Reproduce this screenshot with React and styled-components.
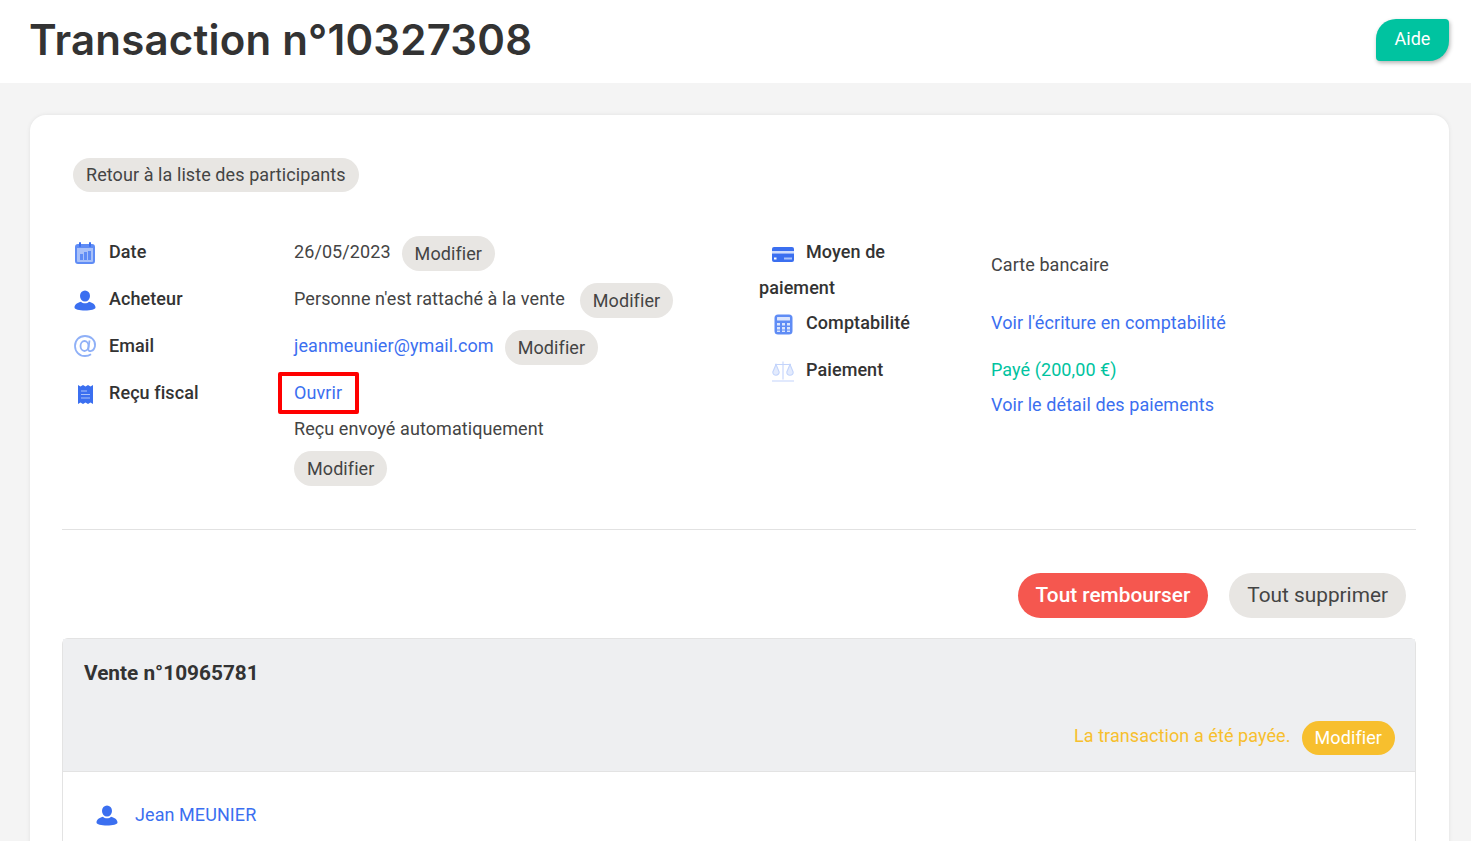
import React from "react";
import styled, { createGlobalStyle } from "styled-components";

const GlobalStyle = createGlobalStyle`
  html, body {
    margin: 0;
    padding: 0;
    height: 100%;
    overflow: hidden;
    background: #f4f4f4;
    font-family: "Roboto", "Liberation Sans", sans-serif;
    font-size: 18px;
    letter-spacing: 0.08px;
    color: #444;
  }
  * { box-sizing: border-box; }
`;

const BLUE = "#3b6ff0";
const MID = "#5f8cf5";
const LIGHT = "#a9c1f9";

const Page = styled.div`
  height: 100vh;
  overflow: hidden;
`;

const Header = styled.header`
  height: 83px;
  background: #fff;
  padding: 0 22px 0 29px;
  display: flex;
  justify-content: space-between;
  align-items: center;
`;

const Title = styled.h1`
  margin: -4px 0 0;
  font-family: "Inter", "Open Sans", sans-serif;
  font-size: 42px;
  font-weight: 600;
  letter-spacing: 0.2px;
  color: #333;
`;

const HelpButton = styled.button`
  width: 73px;
  height: 42px;
  margin-top: -4px;
  padding: 0 0 2px;
  border: 0;
  border-radius: 20px 4px 20px 4px;
  background: #00c3a0;
  color: #fff;
  font: 400 18px "Roboto", sans-serif;
  box-shadow: 1px 2px 4px rgba(0, 0, 0, 0.3);
`;

const Main = styled.main`
  padding: 32px 22px 0 30px;
`;

const Card = styled.section`
  background: #fff;
  border-radius: 16px;
  padding: 43px 33px 40px 32px;
  box-shadow: 0 0 4px rgba(0, 0, 0, 0.08);
`;

const Pill = styled.button`
  display: ${(p) => (p.$block ? "block" : "inline-block")};
  height: ${(p) => p.$height || 35}px;
  padding: 0 13px 1px;
  border: 0;
  border-radius: 18px;
  background: ${(p) => p.$bg || "#e8e6e3"};
  color: ${(p) => p.$color || "#444"};
  font: 400 18px "Roboto", sans-serif;
  letter-spacing: 0.08px;
  white-space: nowrap;
`;

const BackRow = styled.div`
  padding-left: 11px;
  height: 34px;
`;

const Details = styled.div`
  display: grid;
  grid-template-columns: 697px 1fr;
  padding: 44px 0 43px;
  border-bottom: 1px solid #e2e2e2;
`;

const LeftColumn = styled.div`
  padding-left: 11px;
`;

const InfoRow = styled.div`
  display: grid;
  grid-template-columns: ${(p) => p.$labelWidth}px 1fr;
  min-height: ${(p) => p.$minHeight || 47}px;
`;

const Label = styled.div`
  margin-top: -2px;
  font-weight: 500;
  color: #333;
  line-height: 36px;
`;

const IconSlot = styled.span`
  display: inline-flex;
  justify-content: center;
  align-items: center;
  width: 24px;
  height: 24px;
  margin: 0 ${(p) => (p.$indent ? 11 : 12)}px 0 ${(p) => p.$indent || 0}px;
  vertical-align: ${(p) => p.$drop || -6}px;
`;

const Value = styled.div`
  display: flex;
  flex-wrap: wrap;
  align-items: flex-start;
  align-content: flex-start;
  column-gap: ${(p) => p.$gap || 11}px;
  padding-top: ${(p) => p.$top || 0}px;
  line-height: 32px;
  color: #444;
`;

const TextLine = styled.div`
  line-height: ${(p) => p.$line || 32}px;
  margin-bottom: ${(p) => p.$after || 0}px;
`;

const BlueLink = styled.a`
  color: ${BLUE};
  text-decoration: none;
`;

const GreenText = styled(TextLine)`
  color: #00c3a0;
`;

const Highlighted = styled.span`
  position: relative;
  display: inline-block;
  &::after {
    content: "";
    position: absolute;
    left: -16px;
    right: -17px;
    top: -5px;
    bottom: -5px;
    border: 4px solid #ff0000;
    border-radius: 2px;
  }
`;

const Actions = styled.div`
  display: flex;
  justify-content: flex-end;
  gap: 21px;
  padding: 43px 10px 20px 0;
`;

const BigPill = styled.button`
  height: 45px;
  padding: 0 18px 1px;
  border: 0;
  border-radius: 23px;
  background: ${(p) => p.$bg};
  color: ${(p) => p.$color};
  font: ${(p) => p.$weight} 20.8px "Roboto", sans-serif;
`;

const SaleBox = styled.div`
  border: 1px solid #e3e3e3;
  border-radius: 6px 6px 0 0;
  height: 300px;
`;

const SaleHeader = styled.div`
  height: 133px;
  background: #eeeff1;
  border-bottom: 1px solid #e3e3e3;
  padding: 19px 20px 16px 21px;
  display: flex;
  flex-direction: column;
  justify-content: space-between;
`;

const SaleTitle = styled.div`
  font-size: 20.8px;
  font-weight: 700;
  color: #333;
  line-height: 30px;
  letter-spacing: 0;
`;

const SaleStatus = styled.div`
  display: flex;
  justify-content: flex-end;
  align-items: flex-start;
  gap: 11px;
  line-height: 30px;
  color: #f7bf2e;
`;

const Participant = styled.div`
  display: flex;
  align-items: center;
  gap: 17px;
  padding: 31px 0 0 33px;
  line-height: 24px;
`;

const CalendarIcon = () => (
  <svg width="20" height="22" viewBox="0 0 20 22">
    <rect x="1" y="3" width="18" height="18" rx="2" fill={LIGHT} stroke={MID} strokeWidth="2" />
    <rect x="1" y="3" width="18" height="3" fill={MID} />
    <rect x="4" y="0" width="2" height="5" rx="1" fill={BLUE} />
    <rect x="14" y="0" width="2" height="5" rx="1" fill={BLUE} />
    <path d="M5 12h3v6H5zM9 10h3v8H9zM13 9h3v9h-3z" fill={MID} />
  </svg>
);

const PersonIcon = () => (
  <svg width="22" height="21" viewBox="0 0 22 21">
    <ellipse cx="11" cy="6" rx="5" ry="5.500" fill={BLUE} />
    <path d="M0.500 17.500c0-3.200 4-5.200 6.500-5.700 1 1 2.500 1.500 4 1.500s3-.5 4-1.500c2.500.5 6.500 2.500 6.500 5.700 0 2-4.700 3-10.500 3s-10.500-1-10.500-3z" fill={BLUE} />
  </svg>
);

const AtIcon = () => (
  <svg width="24" height="24" viewBox="0 0 24 24" fill="none" stroke="#8fb0f7" strokeWidth="1.800">
    <ellipse cx="11.500" cy="12" rx="4" ry="5" />
    <path d="M16.500 6.500l-1.200 9c-.2 2.500 5.700 2.500 6.700-3.500C22.800 6.500 18 2 12 2 6 2 2 6.500 2 12s4.200 10 10 10c2.500 0 4.500-.7 6-1.800" />
  </svg>
);

const ReceiptIcon = () => (
  <svg width="17" height="21" viewBox="0 0 17 21">
    <path d="M1 1l2.500 1.500L6 1l2.500 1.500L11 1l2.500 1.500L16 1v19l-2.500-1.500L11 20l-2.500-1.500L6 20l-2.500-1.500L1 20z" fill={BLUE} />
    <path d="M4 7h6M4 10.500h9M4 14h9" stroke={LIGHT} strokeWidth="1.200" />
  </svg>
);

const CardIcon = () => (
  <svg width="22" height="15" viewBox="0 0 22 15">
    <path d="M0 2a2 2 0 0 1 2-2h18a2 2 0 0 1 2 2v2H0z" fill={BLUE} />
    <rect y="4" width="22" height="2.500" fill="#cfdcfc" />
    <path d="M0 6.500h22V13a2 2 0 0 1-2 2H2a2 2 0 0 1-2-2z" fill={BLUE} />
    <rect x="2" y="10.500" width="2.500" height="2" fill="#fff" />
    <rect x="12" y="10.500" width="8" height="2" fill={LIGHT} />
  </svg>
);

const CalculatorIcon = () => (
  <svg width="19" height="21" viewBox="0 0 19 21">
    <rect x="0.500" y="0.500" width="18" height="20" rx="3.500" fill={MID} />
    <rect x="3" y="3" width="13" height="3.500" rx="0.500" fill="#dbe5fd" />
    <path d="M3 9h3v2.500H3zM8 9h3v2.500H8zM13 9h3v2.500h-3zM3 13h3v2.500H3zM8 13h3v2.500H8zM13 13h3v2.500h-3zM3 16.500h3V18H3zM8 16.500h3V18H8zM13 16.500h3V18h-3z" fill="#dbe5fd" />
  </svg>
);

const ScaleIcon = () => (
  <svg width="22" height="21" viewBox="0 0 22 21" fill="none" stroke="#c3d4fb" strokeWidth="1.100">
    <path d="M11 0.500v18M3 3.500h16M0 20h22" />
    <path d="M0.800 11l3.200-7.500L7.200 11a3.200 3.200 0 0 1-6.400 0zM14.800 11L18 3.500 21.200 11a3.200 3.200 0 0 1-6.400 0z" fill="#e3ebfd" />
  </svg>
);

const App = () => (
  <Page>
    <GlobalStyle />
    <Header>
      <Title>Transaction n°10327308</Title>
      <HelpButton>Aide</HelpButton>
    </Header>
    <Main>
      <Card>
        <BackRow>
          <Pill $height={34}>Retour à la liste des participants</Pill>
        </BackRow>
        <Details>
          <LeftColumn>
            <InfoRow $labelWidth={221}>
              <Label><IconSlot><CalendarIcon /></IconSlot>Date</Label>
              <Value>26/05/2023 <Pill>Modifier</Pill></Value>
            </InfoRow>
            <InfoRow $labelWidth={221}>
              <Label><IconSlot><PersonIcon /></IconSlot>Acheteur</Label>
              <Value $gap={15}>Personne n'est rattaché à la vente <Pill>Modifier</Pill></Value>
            </InfoRow>
            <InfoRow $labelWidth={221}>
              <Label><IconSlot><AtIcon /></IconSlot>Email</Label>
              <Value><BlueLink>jeanmeunier@ymail.com</BlueLink> <Pill>Modifier</Pill></Value>
            </InfoRow>
            <InfoRow $labelWidth={221}>
              <Label><IconSlot><ReceiptIcon /></IconSlot>Reçu fiscal</Label>
              <div>
                <TextLine $after={2}>
                  <Highlighted><BlueLink>Ouvrir</BlueLink></Highlighted>
                </TextLine>
                <TextLine $line={36} $after={4}>Reçu envoyé automatiquement</TextLine>
                <Pill $block>Modifier</Pill>
              </div>
            </InfoRow>
          </LeftColumn>
          <div>
            <InfoRow $labelWidth={232} $minHeight={71}>
              <Label><IconSlot $indent={12} $drop={-4}><CardIcon /></IconSlot>Moyen de<br />paiement</Label>
              <Value $top={13}>Carte bancaire</Value>
            </InfoRow>
            <InfoRow $labelWidth={232}>
              <Label><IconSlot $indent={12}><CalculatorIcon /></IconSlot>Comptabilité</Label>
              <Value><BlueLink>Voir l'écriture en comptabilité</BlueLink></Value>
            </InfoRow>
            <InfoRow $labelWidth={232}>
              <Label><IconSlot $indent={12}><ScaleIcon /></IconSlot>Paiement</Label>
              <div>
                <GreenText $after={3}>Payé (200,00 €)</GreenText>
                <TextLine><BlueLink>Voir le détail des paiements</BlueLink></TextLine>
              </div>
            </InfoRow>
          </div>
        </Details>
        <Actions>
          <BigPill $bg="#f5574f" $color="#fff" $weight={500}>Tout rembourser</BigPill>
          <BigPill $bg="#e8e6e3" $color="#444" $weight={400}>Tout supprimer</BigPill>
        </Actions>
        <SaleBox>
          <SaleHeader>
            <SaleTitle>Vente n°10965781</SaleTitle>
            <SaleStatus>
              La transaction a été payée.
              <Pill $height={34} $bg="#f7bf2e" $color="#fff">Modifier</Pill>
            </SaleStatus>
          </SaleHeader>
          <Participant>
            <PersonIcon />
            <BlueLink>Jean MEUNIER</BlueLink>
          </Participant>
        </SaleBox>
      </Card>
    </Main>
  </Page>
);

export default App;
